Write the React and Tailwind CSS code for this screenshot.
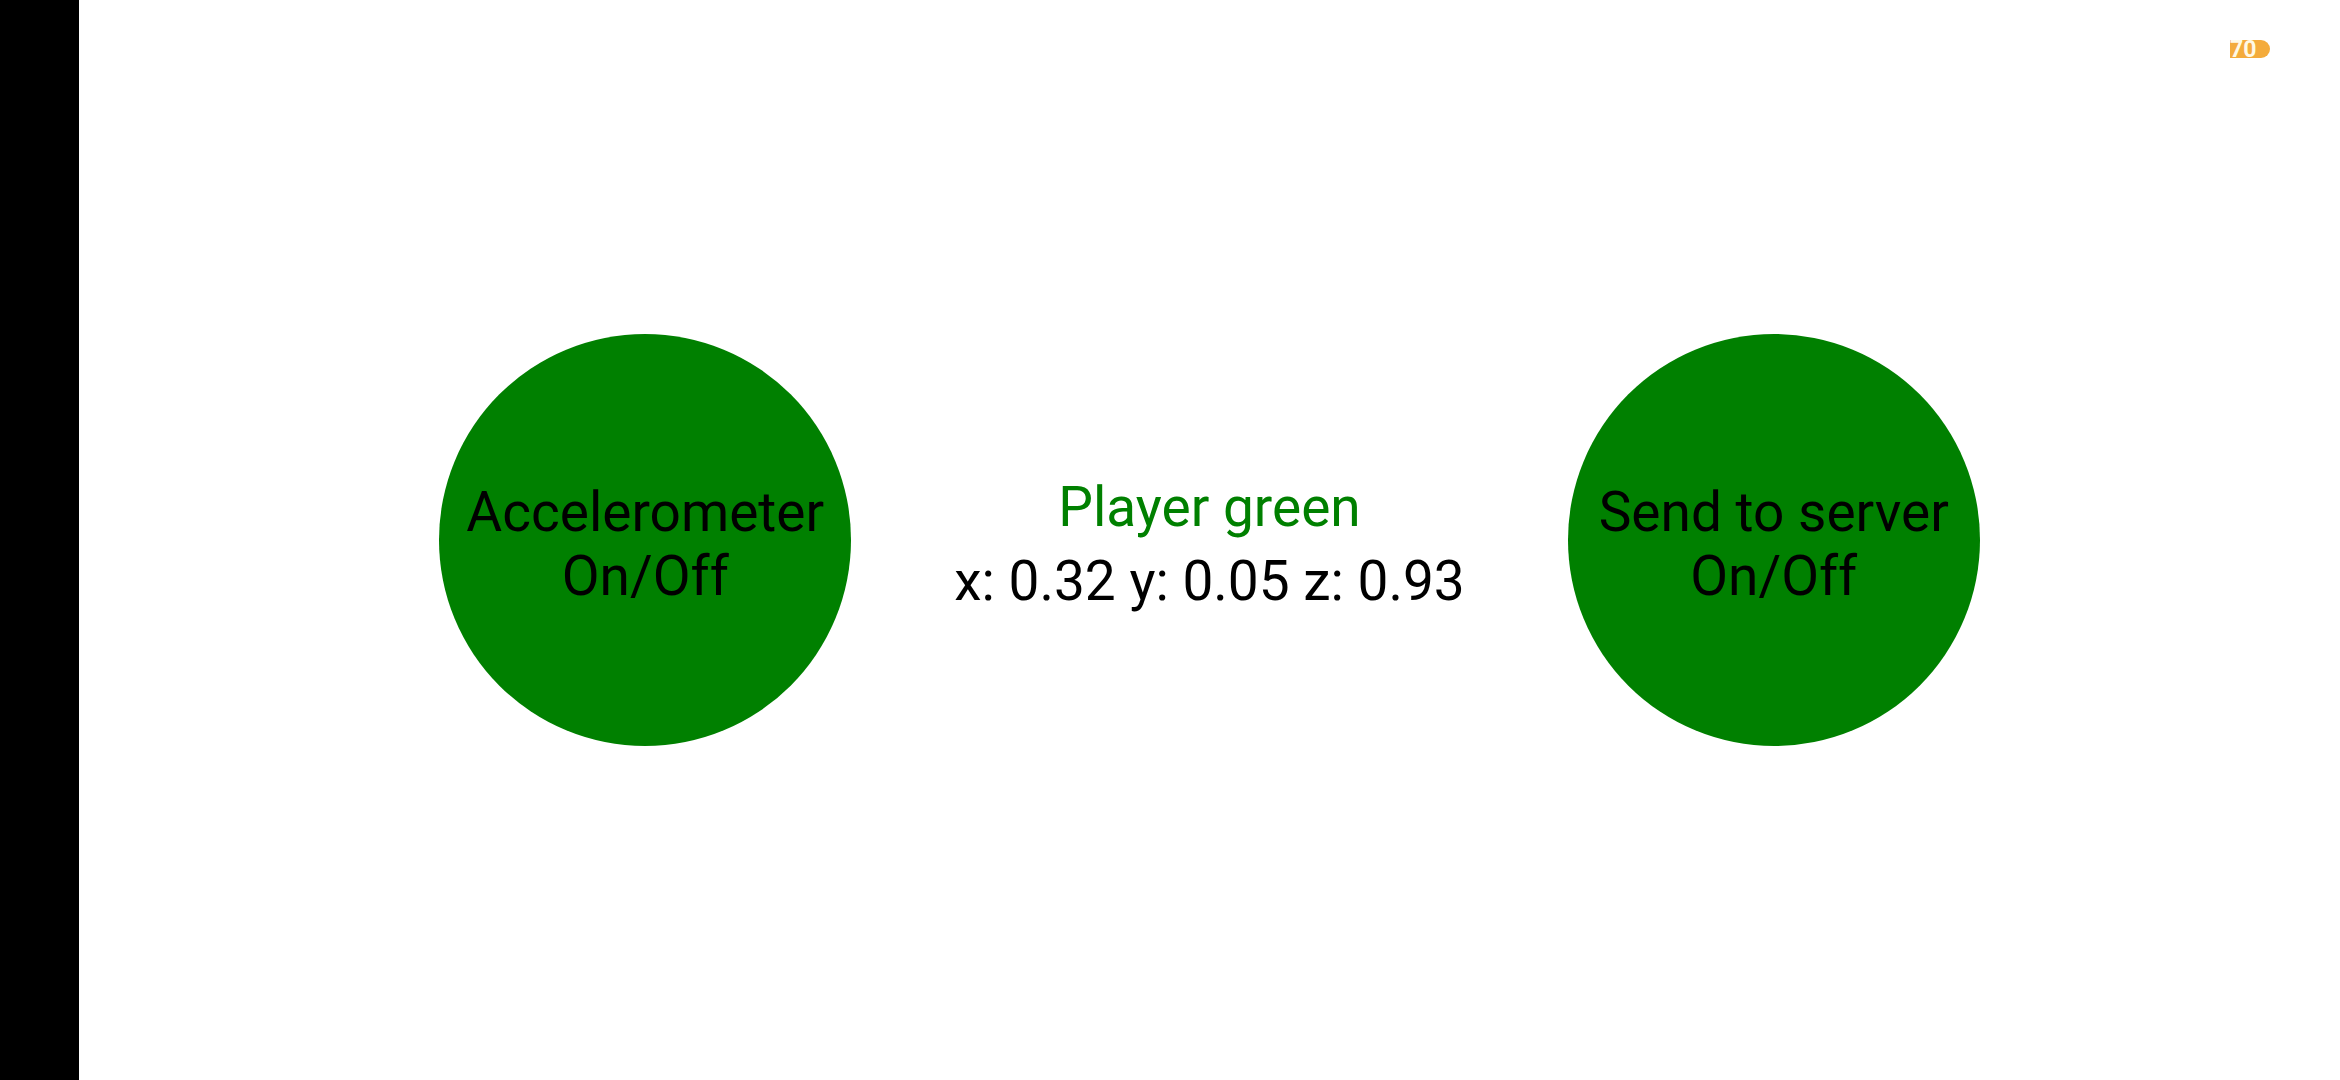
export default function App() {
  return (
    <div className="flex min-h-screen bg-white font-['Roboto',sans-serif] text-[55px] leading-[64px] text-black">
      <aside className="w-[79px] shrink-0 bg-black" />
      <main className="relative flex grow items-center justify-center gap-[103px]">
        <button type="button" className="size-[412px] shrink-0 rounded-full bg-[#008000] pt-2 text-center">
          Accelerometer
          <br />
          On/Off
        </button>
        <section className="pt-2 text-center">
          <h1 className="text-[#008000]">Player green</h1>
          <p className="mt-2.5">x: 0.32 y: 0.05 z: 0.93</p>
        </section>
        <button type="button" className="size-[412px] shrink-0 rounded-full bg-[#008000] pt-2 text-center">
          Send to server
          <br />
          On/Off
        </button>
        <div
          aria-label="Battery level"
          className="absolute top-10 right-[70px] flex h-[18px] w-10 items-center rounded-r-full bg-[#f4ab3b] pt-0.5 text-[23px] leading-[28px] font-bold text-[#fff9e5]"
        >
          70
        </div>
      </main>
    </div>
  );
}
